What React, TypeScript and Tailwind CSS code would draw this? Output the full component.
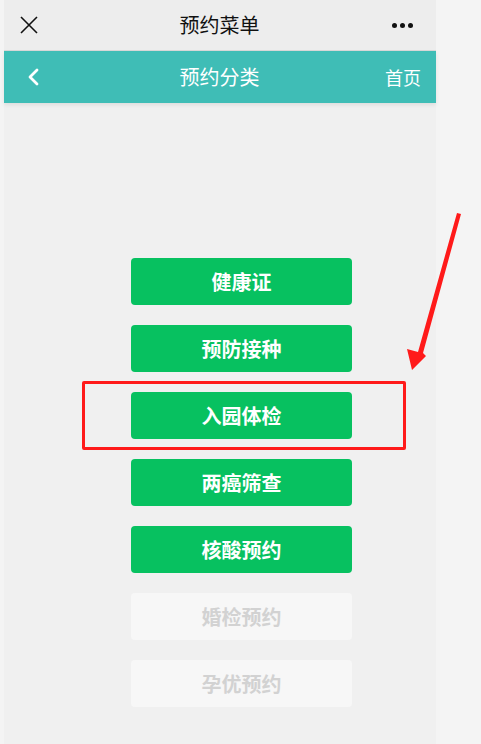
import React from 'react';

const items = [
  { label: '健康证', active: true },
  { label: '预防接种', active: true },
  { label: '入园体检', active: true },
  { label: '两癌筛查', active: true },
  { label: '核酸预约', active: true },
  { label: '婚检预约', active: false },
  { label: '孕优预约', active: false },
];

const App = () => {
  return (
    <div
      className="relative flex w-[481px] h-[744px] bg-[#f4f4f4] overflow-hidden"
      style={{ fontFamily: '"Noto Sans CJK SC", "Noto Sans", sans-serif' }}
    >
      <div className="w-[4px] shrink-0" />

      {/* Phone */}
      <div className="w-[432px] shrink-0 flex flex-col bg-[#f0f0f0]">
        {/* WeChat top bar */}
        <div className="h-[51px] bg-[#ededed] flex items-center justify-between px-[14px] border-b border-[#d9d9d9]">
          <svg width="20" height="20" viewBox="0 0 20 20" className="ml-[1px]">
            <path d="M2 2 L18 18 M18 2 L2 18" stroke="#111" strokeWidth="1.6" fill="none" />
          </svg>
          <span className="text-[20px] text-[#111] ml-[8px]">预约菜单</span>
          <div className="flex gap-[3px] mr-[9px]">
            <span className="w-[5px] h-[5px] rounded-full bg-[#111]" />
            <span className="w-[5px] h-[5px] rounded-full bg-[#111]" />
            <span className="w-[5px] h-[5px] rounded-full bg-[#111]" />
          </div>
        </div>

        {/* Teal nav */}
        <div className="h-[52px] bg-[#3fbdb6] flex items-center justify-between pl-[22px] pr-[15px] shadow-[0_2px_4px_rgba(0,0,0,0.08)] relative z-10">
          <svg width="14" height="20" viewBox="0 0 14 20">
            <path d="M11 3 L4 10 L11 17" stroke="#fff" strokeWidth="2.8" fill="none" strokeLinecap="round" strokeLinejoin="round" />
          </svg>
          <span className="text-[20px] text-white ml-[14px]">预约分类</span>
          <span className="text-[18px] text-white">首页</span>
        </div>

        {/* Buttons */}
        <div className="flex flex-col items-start pl-[127px] pt-[155px] gap-[20px]">
          {items.map((it) => (
            <div
              key={it.label}
              className={
                it.active
                  ? 'w-[221px] h-[47px] rounded-[4px] bg-[#07c160] text-white font-bold text-[20px] flex items-center justify-center'
                  : 'w-[221px] h-[47px] rounded-[4px] bg-[#f7f7f7] text-[#d2d2d2] font-bold text-[20px] flex items-center justify-center'
              }
            >
              {it.label}
            </div>
          ))}
        </div>
      </div>

      {/* Annotation: red box */}
      <div className="absolute left-[82px] top-[381px] w-[324px] h-[69px] border-[3px] border-[#ff1a1a] rounded-[2px]" />

      {/* Annotation: arrow */}
      <svg className="absolute left-0 top-0" width="481" height="744" viewBox="0 0 481 744">
        <path d="M457 213 L461 214 L423 353 L426 356 L412 370 L407 349 L418 352 Z" fill="#ff1a1a" />
      </svg>
    </div>
  );
};

export default App;
